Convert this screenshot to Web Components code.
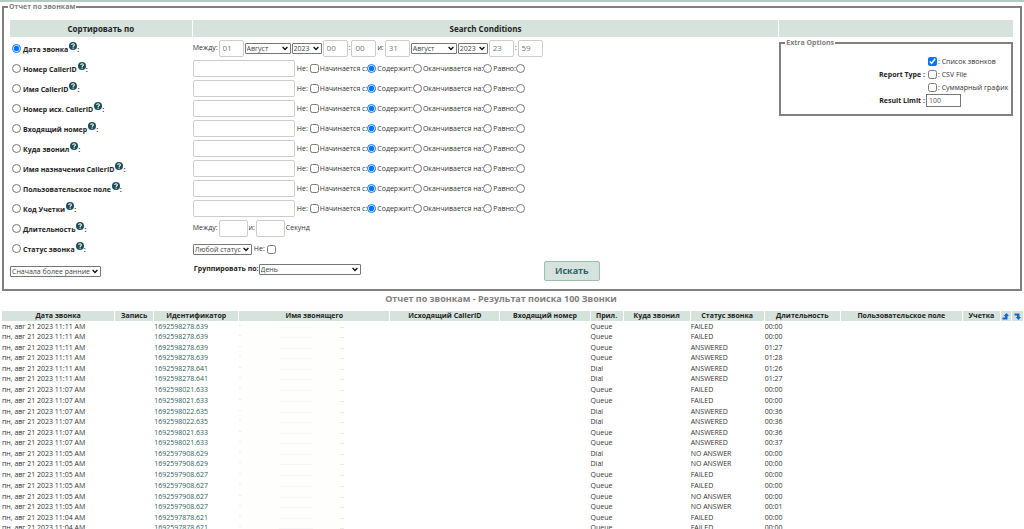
<!DOCTYPE html>
<html lang="ru">
<head>
<meta charset="utf-8">
<title>Отчет по звонкам</title>
<style>
html { background: #fff; scrollbar-width: none; }
body { margin: 0; font: 7px/10px "Open Sans", "Noto Sans", sans-serif; color: #333; }
</style>
</head>
<body>
<call-report></call-report>

<template id="t-report">
  <style>
    :host { display: block; border-top: 2px solid #b1cbc1; }
    .panel { margin: 0 2px; padding-top: 1px; }
    h1 { margin: 2px 0 6px; padding-right: 22px; font-size: 9px; line-height: 12px; font-weight: 700; color: #808080; text-align: center; }
  </style>
  <search-panel class="panel"></search-panel>
  <h1>Отчет по звонкам - Результат поиска 100 Звонки</h1>
  <results-table></results-table>
</template>

<template id="t-panel">
  <style>
    fieldset { margin: 0; padding: 9px 7px 5px 6px; border: 2px solid #808080; min-width: 0; }
    legend { margin-left: -2px; padding: 0 1px; font-weight: 700; line-height: 8px; color: #808080; }
    .grid { display: grid; grid-template-columns: 182fr 586fr 234fr; column-gap: 1px; }
    h2 { margin: 0; height: 17px; font-size: 8px; line-height: 17px; font-weight: 700; color: #222; text-align: center; background: #d6e3dc; }
    .conditions { padding-top: 1px; }
    .bottom { display: flex; align-items: center; height: 26px; }
    .bottom .group { flex: 0 1 351px; display: flex; align-items: center; padding-left: 1px; font-weight: 700; color: #222; margin-bottom: 4px; box-sizing: border-box; }
    .bottom select { width: 102px; font-weight: 400; }
    button { width: 56px; height: 20px; padding: 0; font: 700 9px/16px "Open Sans", sans-serif; color: #2d6068; background: #d6e3dc; border: 1px solid #9dbdb3; border-radius: 2px; }
    extra-options { margin-top: 2px; }
  </style>
  <fieldset>
    <legend>Отчет по звонкам</legend>
    <div class="grid">
      <h2>Сортировать по</h2><h2>Search Conditions</h2><h2></h2>
      <sort-list></sort-list>
      <div class="conditions">
        <date-range></date-range>
        <text-condition name="Номер CallerID"></text-condition>
        <text-condition name="Имя CallerID"></text-condition>
        <text-condition name="Номер исх. CallerID"></text-condition>
        <text-condition name="Входящий номер"></text-condition>
        <text-condition name="Куда звонил"></text-condition>
        <text-condition name="Имя назначения CallerID"></text-condition>
        <text-condition name="Пользовательское поле"></text-condition>
        <text-condition name="Код Учетки"></text-condition>
        <duration-range></duration-range>
        <status-condition></status-condition>
        <div class="bottom">
          <label class="group">Группировать по:<select><option>День</option></select></label>
          <button type="button">Искать</button>
        </div>
      </div>
      <extra-options></extra-options>
    </div>
  </fieldset>
</template>

<template id="t-sort">
  <style>
    :host { padding-top: 1px; }
    ul { margin: 0; padding: 0; list-style: none; }
    li { display: flex; align-items: center; height: 20px; padding-left: 2px; font-weight: 700; color: #222; }
    label { padding-top: 3px; margin-left: 2px; }
    help-icon { margin: 0 0 4px 1px; }
    li > span { padding-top: 3px; }
    .order { display: flex; align-items: center; height: 26px; }
    .order select { width: 91px; }
  </style>
  <ul></ul>
  <div class="order"><select aria-label="Порядок"><option>Сначала более ранние</option></select></div>
</template>

<template id="t-help">
  <style>:host { display: block; width: 8px; height: 8px; } svg { display: block; }</style>
  <svg width="8" height="8" viewBox="0 0 14 14" role="img" aria-label="Справка"><circle cx="7" cy="7" r="7" fill="#1d4f58"/><path d="M4.700 5.400C4.800 2.400 9.400 2.500 9.300 5.200C9.300 6.800 7.200 6.700 7.200 8.600" fill="none" stroke="#fff" stroke-width="1.900"/><rect x="6.200" y="9.800" width="2" height="2" fill="#fff"/></svg>
</template>

<template id="t-text">
  <style>
    :host { display: flex; align-items: center; height: 20px; }
    .value { width: 102px; height: 17px; margin-right: 2px; }
    label { display: flex; align-items: center; margin-right: 1px; }
    label span { padding-top: 2px; }
    input[type=checkbox] { margin-left: 2px; }
  </style>
  <input class="value box" type="text">
  <label><span>Не:</span><input type="checkbox"></label>
  <label><span>Начинается с:</span><input type="radio" name="mode" checked></label>
  <label><span>Содержит:</span><input type="radio" name="mode"></label>
  <label><span>Оканчивается на:</span><input type="radio" name="mode"></label>
  <label><span>Равно:</span><input type="radio" name="mode"></label>
</template>

<template id="t-date">
  <style>
    :host { display: flex; align-items: center; gap: 1px; height: 20px; }
    .num { width: 25px; height: 17px; }
    .month { width: 46px; }
    .year { width: 30px; }
  </style>
  <span>Между:</span><input class="num box" value="01" aria-label="День с"><select class="month" aria-label="Месяц с"><option>Август</option></select><select class="year" aria-label="Год с"><option>2023</option></select><input class="num box" value="00" aria-label="Час с"><span>:</span><input class="num box" value="00" aria-label="Минуты с"><span>и:</span><input class="num box" value="31" aria-label="День по"><select class="month" aria-label="Месяц по"><option>Август</option></select><select class="year" aria-label="Год по"><option>2023</option></select><input class="num box" value="23" aria-label="Час по"><span>:</span><input class="num box" value="59" aria-label="Минуты по">
</template>

<template id="t-duration">
  <style>
    :host { display: flex; align-items: center; gap: 1px; height: 20px; }
    .box { width: 29px; height: 17px; }
  </style>
  <span>Между:</span><input class="box" aria-label="Длительность от"><span>и:</span><input class="box" aria-label="Длительность до"><span>Секунд</span>
</template>

<template id="t-status">
  <style>
    :host { display: flex; align-items: center; gap: 2px; height: 20px; padding-top: 2px; }
    select { width: 59px; }
    label { display: flex; align-items: center; gap: 2px; }
  </style>
  <select aria-label="Статус звонка"><option>Любой статус</option></select>
  <label>Не:<input type="checkbox"></label>
</template>

<template id="t-extra">
  <style>
    :host { display: block; }
    fieldset { margin: 0; padding: 8px 7px 7px; border: 2px solid #808080; }
    legend { margin-left: -3px; padding: 0 1px; font-weight: 700; line-height: 8px; color: #808080; }
    .form { display: grid; grid-template-columns: 1fr 78px; column-gap: 1px; align-items: center; }
    .head { font-weight: 700; color: #222; text-align: right; }
    .types label { display: flex; align-items: center; gap: 1px; height: 13px; margin-left: 2px; white-space: nowrap; }
    .limit { width: 35px; height: 13px; padding: 0 2px; border: 1px solid #767676; }
  </style>
  <fieldset>
    <legend>Extra Options</legend>
    <div class="form">
      <span class="head">Report Type :</span>
      <div class="types">
        <label><input type="checkbox" checked> : Список звонков</label>
        <label><input type="checkbox"> : CSV File</label>
        <label><input type="checkbox"> : Суммарный график</label>
      </div>
      <label class="head" for="limit">Result Limit :</label>
      <input id="limit" class="limit" type="text" value="100">
    </div>
  </fieldset>
</template>

<template id="t-results">
  <style>
    :host { display: block; padding-left: 1px; }
    table { width: 100%; table-layout: fixed; border-collapse: separate; border-spacing: 1px 0; }
    th { height: 10px; padding: 0; line-height: 10px; font-weight: 700; color: #222; background: #d6e3dc; white-space: nowrap; }
    td { height: 10px; padding: 0; line-height: 10px; white-space: nowrap; }
    tbody tr:nth-child(odd) td, tbody tr:nth-child(8n) td { height: 11px; }
    a { color: #2f625e; text-decoration: none; }
    th a, th svg { display: block; margin: 0 auto; }
    th a { width: 7px; }
    .hidden { display: block; width: 106px; height: 10px; background: linear-gradient(#ededed, #ededed) 0 3px / 2px 1px no-repeat, linear-gradient(#f7f7f7, #f7f7f7) 40px 5px / 34px 1px no-repeat, linear-gradient(#e9e9e9, #e9e9e9) 101px 5px / 4px 1px no-repeat, #fefefd; }
  </style>
  <table>
    <colgroup></colgroup>
    <thead><tr></tr></thead>
    <tbody></tbody>
  </table>
</template>

<script>
const controls = `
  *, *::before { box-sizing: border-box; }
  input, select { font: inherit; color: #555; margin: 0; }
  input[type=radio], input[type=checkbox] { width: 9px; height: 9px; flex: none; }
  .box { padding: 0 3px 1px; font-size: 8px; color: #777; background: #fff; border: 1px solid #ccc; border-radius: 2px; }
  select { height: 11px; padding: 0 7px 0 1px; line-height: 9px; color: #444; border: 1px solid #767676; border-radius: 1px; appearance: none;
    background: #fff url("data:image/svg+xml,%3Csvg xmlns='http://www.w3.org/2000/svg' width='6' height='5' viewBox='0 0 6 5'%3E%3Cpath d='M.6 1l2.400 2.400L5.400 1' fill='none' stroke='%23111' stroke-width='1.400'/%3E%3C/svg%3E") right 2px center no-repeat; }
`;

class Base extends HTMLElement {
  constructor() {
    super();
    const root = this.attachShadow({ mode: "open" });
    const style = document.createElement("style");
    style.textContent = ":host { display: block; }" + controls;
    root.append(style, document.getElementById(this.constructor.tpl).content.cloneNode(true));
  }
}

class HelpIcon extends Base { static tpl = "t-help"; }
class DateRange extends Base { static tpl = "t-date"; }
class DurationRange extends Base { static tpl = "t-duration"; }
class StatusCondition extends Base { static tpl = "t-status"; }
class ExtraOptions extends Base { static tpl = "t-extra"; }

class TextCondition extends Base {
  static tpl = "t-text";
  connectedCallback() {
    this.shadowRoot.querySelector(".value").setAttribute("aria-label", this.getAttribute("name"));
  }
}

class SortList extends Base {
  static tpl = "t-sort";
  connectedCallback() {
    const names = ["Дата звонка", "Номер CallerID", "Имя CallerID", "Номер исх. CallerID", "Входящий номер", "Куда звонил",
      "Имя назначения CallerID", "Пользовательское поле", "Код Учетки", "Длительность", "Статус звонка"];
    this.shadowRoot.querySelector("ul").innerHTML = names.map((n, i) =>
      `<li><input type="radio" name="order" id="s${i}"${i ? "" : " checked"}><label for="s${i}">${n}</label><help-icon></help-icon><span>:</span></li>`).join("");
  }
}

class ResultsTable extends Base {
  static tpl = "t-results";
  connectedCallback() {
    const arrow = d => `<a href="#" aria-label="Сортировка"><svg width="7" height="7" viewBox="0 0 14 14"><path d="${d}" fill="#1668c8"/></svg></a>`;
    const cols = [["Дата звонка", 112], ["Запись", 38], ["Идентификатор", 84], ["Имя звонящего", 150], ["Исходящий CallerID", 109],
      ["Входящий номер", 89], ["Прил.", 32], ["Куда звонил", 66], ["Статус звонка", 73], ["Длительность", 75],
      ["Пользовательское поле", 121], ["Учетка", 37],
      [arrow("M1 13V9H6V6H3L9 0L14 6H11V13Z"), 10], [arrow("M1 1H11V8H14L9 14L3 8H6V5H1Z"), 11]];
    const rows = [
      ["11:11", "8278.639", "Queue", "FAILED", "00:00"], ["11:11", "8278.639", "Queue", "FAILED", "00:00"],
      ["11:11", "8278.639", "Queue", "ANSWERED", "01:27"], ["11:11", "8278.639", "Queue", "ANSWERED", "01:28"],
      ["11:11", "8278.641", "Dial", "ANSWERED", "01:26"], ["11:11", "8278.641", "Dial", "ANSWERED", "01:27"],
      ["11:07", "8021.633", "Queue", "FAILED", "00:00"], ["11:07", "8021.633", "Queue", "FAILED", "00:00"],
      ["11:07", "8022.635", "Dial", "ANSWERED", "00:36"], ["11:07", "8022.635", "Dial", "ANSWERED", "00:36"],
      ["11:07", "8021.633", "Queue", "ANSWERED", "00:36"], ["11:07", "8021.633", "Queue", "ANSWERED", "00:37"],
      ["11:05", "7908.629", "Dial", "NO ANSWER", "00:00"], ["11:05", "7908.629", "Dial", "NO ANSWER", "00:00"],
      ["11:05", "7908.627", "Queue", "FAILED", "00:00"], ["11:05", "7908.627", "Queue", "FAILED", "00:00"],
      ["11:05", "7908.627", "Queue", "NO ANSWER", "00:00"], ["11:05", "7908.627", "Queue", "NO ANSWER", "00:01"],
      ["11:04", "7878.621", "Queue", "FAILED", "00:00"], ["11:04", "7878.621", "Queue", "FAILED", "00:00"]];
    const $ = s => this.shadowRoot.querySelector(s);
    $("colgroup").innerHTML = cols.map(c => `<col style="width:${c[1]}px">`).join("");
    $("thead tr").innerHTML = cols.map(c => `<th scope="col">${c[0]}</th>`).join("");
    $("tbody").innerHTML = rows.map(([time, id, app, status, len]) =>
      `<tr><td>пн, авг 21 2023 ${time} AM</td><td></td><td><a href="#">169259${id}</a></td><td><span class="hidden"></span></td><td></td><td></td>` +
      `<td>${app}</td><td></td><td>${status}</td><td>${len}</td><td></td><td></td><td></td><td></td></tr>`).join("");
  }
}

class SearchPanel extends Base { static tpl = "t-panel"; }
class CallReport extends Base { static tpl = "t-report"; }

customElements.define("help-icon", HelpIcon);
customElements.define("date-range", DateRange);
customElements.define("duration-range", DurationRange);
customElements.define("status-condition", StatusCondition);
customElements.define("extra-options", ExtraOptions);
customElements.define("text-condition", TextCondition);
customElements.define("sort-list", SortList);
customElements.define("results-table", ResultsTable);
customElements.define("search-panel", SearchPanel);
customElements.define("call-report", CallReport);
</script>
</body>
</html>
